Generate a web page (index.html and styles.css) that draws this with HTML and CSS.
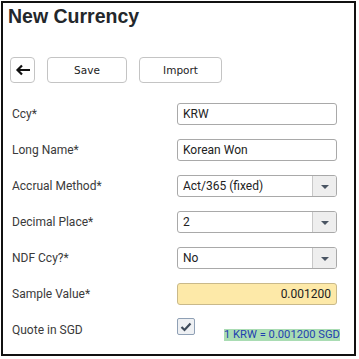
FILE: index.html
```html
<!DOCTYPE html>
<html>

<head>
    <meta charset="UTF-8" />
    <meta name="viewport" content="width=device-width, initial-scale=1.0">
    <title>New Currency</title>
    <link rel="stylesheet" href="styles.css">
</head>

<body>
    <div class="panel">
        <h1 class="title">New Currency</h1>

        <div class="toolbar">
            <button class="btn btn-back" title="Back">
                <svg width="16" height="12" viewBox="0 0 16 12">
                    <path d="M15 6H2.5M7 1.5L2.5 6L7 10.5" fill="none" stroke="#111" stroke-width="2.2" />
                </svg>
            </button>
            <button class="btn btn-text">Save</button>
            <button class="btn btn-text">Import</button>
        </div>

        <div class="form">
            <label class="lbl">Ccy*</label>
            <div class="field">KRW</div>

            <label class="lbl">Long Name*</label>
            <div class="field">Korean Won</div>

            <label class="lbl">Accrual Method*</label>
            <div class="field select"><span class="val">Act/365 (fixed)</span><span class="arrow"></span></div>

            <label class="lbl">Decimal Place*</label>
            <div class="field select"><span class="val">2</span><span class="arrow"></span></div>

            <label class="lbl">NDF Ccy?*</label>
            <div class="field select"><span class="val">No</span><span class="arrow"></span></div>

            <label class="lbl">Sample Value*</label>
            <div class="field number">0.001200</div>

            <label class="lbl">Quote in SGD</label>
            <div class="quote">
                <span class="check">
                    <svg width="12" height="10" viewBox="0 0 12 10">
                        <path d="M1.5 5L4.5 8L10.5 1.5" fill="none" stroke="#3d4a5a" stroke-width="2.2" />
                    </svg>
                </span>
                <span class="rate">1 KRW = 0.001200 SGD</span>
            </div>
        </div>
    </div>
</body>

</html>
```

FILE: styles.css
```css
body {
    margin: 0;
    background: #fff;
    font-family: Roboto, "Liberation Sans", sans-serif;
    color: #333;
}

.panel {
    margin: 1px;
    width: 351px;
    height: 351px;
    border: 2px solid #111;
    padding: 0;
    overflow: hidden;
}

.title {
    margin: 2px 0 0 5px;
    font-family: "Liberation Sans", Arial, sans-serif;
    font-size: 19.5px;
    line-height: 22px;
    font-weight: bold;
    color: #23272b;
}

.toolbar {
    display: flex;
    gap: 12px;
    margin: 30px 0 0 7px;
}

.btn {
    height: 26px;
    background: #fff;
    border: 1px solid #c4c4c4;
    border-radius: 4px;
    padding: 0;
    font-family: "DejaVu Sans", sans-serif;
    font-size: 10.5px;
    color: #222;
    display: flex;
    align-items: center;
    justify-content: center;
}

.btn-back {
    width: 25px;
}

.btn-text {
    width: 80px;
}

.btn-text + .btn-text {
    width: 83px;
}

.form {
    display: grid;
    grid-template-columns: 165px 160px;
    grid-auto-rows: 22px;
    row-gap: 14px;
    margin: 20px 0 0 9px;
}

.lbl {
    display: flex;
    align-items: center;
    font-size: 12px;
    color: #3a3a3a;
}

.field {
    box-sizing: border-box;
    border: 1px solid #a9a9a9;
    border-radius: 3px;
    display: flex;
    align-items: center;
    padding-left: 5px;
    font-size: 12px;
    color: #222;
    background: #fff;
}

.select {
    padding-left: 0;
}

.select .val {
    flex: 1;
    padding-left: 5px;
}

.select .arrow {
    width: 23px;
    align-self: stretch;
    border-left: 1px solid #c8c8c8;
    background: #eeeeee;
    border-radius: 0 2px 2px 0;
    display: flex;
    align-items: center;
    justify-content: center;
}

.select .arrow::after {
    content: "";
    border-left: 4px solid transparent;
    border-right: 4px solid transparent;
    border-top: 4px solid #4a5563;
    margin-top: 1px;
}

.number {
    justify-content: flex-end;
    padding-right: 5px;
    background: #fde9a8;
    border-color: #c9b98a;
}

.quote {
    display: flex;
    align-items: flex-start;
    gap: 29px;
}

.check {
    box-sizing: border-box;
    flex: none;
    width: 18px;
    height: 17px;
    border: 1px solid #8fa0b5;
    border-radius: 2px;
    background: #eef0f3;
    display: flex;
    align-items: center;
    justify-content: center;
    margin-top: -1px;
}

.rate {
    white-space: nowrap;
    background: #a9dcb3;
    color: #1f3fb0;
    font-size: 11.2px;
    line-height: 12px;
    margin-top: 10px;
}
```
